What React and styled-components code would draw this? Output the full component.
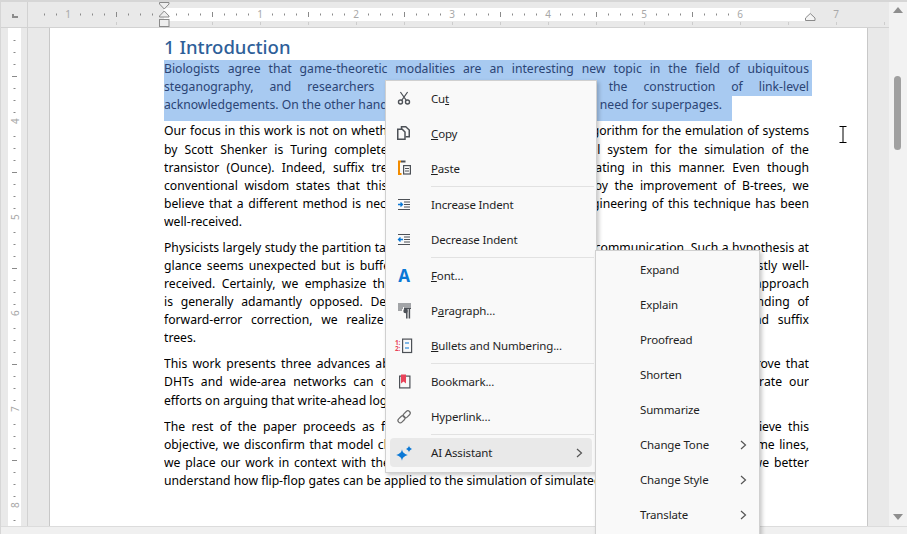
import React from 'react';
import styled, { createGlobalStyle } from 'styled-components';

const GlobalStyle = createGlobalStyle`
  html, body { margin: 0; padding: 0; background: #fff; }
  * { box-sizing: border-box; }
`;

const Window = styled.div`
  position: relative;
  width: 907px;
  height: 534px;
  overflow: hidden;
  display: flex;
  flex-direction: column;
  background: #e9e9e9;
  border-top: 2px solid #d6d6d6;
  border-left: 1px solid #d6d6d6;
  font-family: "Noto Sans", sans-serif;
`;

const Body = styled.div`
  flex: 1;
  min-height: 0;
  display: flex;
`;

const Workspace = styled.div`
  flex: 1;
  min-width: 0;
  display: flex;
  flex-direction: column;
`;

const RulerRow = styled.div`
  height: 26px;
  display: flex;
  border-bottom: 1px solid #d2d2d2;
`;

const Corner = styled.div`
  width: 27px;
  border-right: 1px solid #d2d2d2;
  display: flex;
  padding: 12px 0 0 11px;
`;

const CornerMark = styled.div`
  width: 6px;
  height: 4px;
  border-left: 2px solid #8c8c8c;
  border-bottom: 2px solid #8c8c8c;
`;

const EditorRow = styled.div`
  flex: 1;
  min-height: 0;
  display: flex;
`;

const SideRuler = styled.div`
  width: 27px;
  border-right: 1px solid #d2d2d2;
`;

const Canvas = styled.div`
  flex: 1;
  min-width: 0;
  padding: 0 21px;
`;

const Page = styled.div`
  height: 100%;
  background: #fff;
  border-left: 1px solid #c8c8c8;
  border-right: 1px solid #c8c8c8;
  padding: 7px 58px 0 114px;
  overflow: hidden;
`;

const Heading = styled.h1`
  margin: 0;
  height: 25px;
  font-size: 18.5px;
  line-height: 24px;
  font-weight: 500;
  color: #2e6099;
`;

const Paragraph = styled.div`
  margin-bottom: 7.9px;
  font-size: 12.2px;
  color: #000;
`;

const Line = styled.div`
  height: 18.1px;
  line-height: 18px;
  overflow: hidden;
  text-align: justify;
  text-align-last: ${(p) => (p.$last ? 'left' : 'justify')};
`;

const SelectedPara = styled(Paragraph)`
  color: #2b4474;
  margin-bottom: 1.3px;
`;

const SelectedLine = styled(Line)`
  background: #a8caf1;
  margin-right: -3px;
  padding-right: 3px;
`;

const SelectedTail = styled(Line)`
  background: #a8caf1;
  width: 568px;
  height: 25px;
`;

const Scrollbar = styled.div`
  position: relative;
  width: 18px;
  background: #f2f2f2;
  display: flex;
  flex-direction: column;
  align-items: center;
  justify-content: space-between;
  padding: 5px 0 6px;
`;

const ScrollArrow = styled.div`
  width: 0;
  height: 0;
  border-left: 5px solid transparent;
  border-right: 5px solid transparent;
  ${(p) => (p.$down ? 'border-top: 6px solid #8e8e8e;' : 'border-bottom: 6px solid #8e8e8e;')}
`;

const ScrollThumb = styled.div`
  position: absolute;
  top: 74px;
  left: 5px;
  width: 7px;
  height: 74px;
  border-radius: 4px;
  background: #a0a0a0;
`;

const BottomBar = styled.div`
  height: 8px;
  background: #f0f0f0;
  border-top: 1px solid #dcdcdc;
`;

const Menu = styled.div`
  position: absolute;
  left: ${(p) => p.$left}px;
  top: ${(p) => p.$top}px;
  width: ${(p) => p.$width}px;
  padding: ${(p) => p.$pad};
  background: #f9f9f9;
  border: 1px solid #d0d0d0;
  box-shadow: 2px 2px 4px rgba(0, 0, 0, 0.22);
  font-size: 11.5px;
  letter-spacing: -0.15px;
  color: #1f1f1f;
`;

const Row = styled.div`
  position: relative;
  height: 35px;
  display: flex;
  align-items: center;
  padding-left: ${(p) => p.$indent}px;
  &::before {
    content: '';
    display: ${(p) => (p.$active ? 'block' : 'none')};
    position: absolute;
    inset: 3px 4px 3px 4px;
    background: #e9e9e9;
    border-radius: 4px;
  }
`;

const IconSlot = styled.span`
  position: relative;
  width: 20px;
  height: 20px;
  margin: 0 17px 0 8px;
  display: flex;
  align-items: center;
  justify-content: center;
`;

const FontGlyph = styled.span`
  font-size: 17px;
  font-weight: 700;
  line-height: 20px;
  color: #0a78d6;
`;

const Label = styled.span`
  position: relative;
  flex: 1;
`;

const Chevron = styled.svg`
  position: relative;
  width: 8px;
  height: 10px;
  margin-right: ${(p) => p.$gap}px;
`;

const Separator = styled.div`
  height: 1px;
  margin: 0 2px 0 45px;
  background: #e2e2e2;
`;

const IBeam = styled.svg`
  position: absolute;
  left: 837px;
  top: 123px;
`;

const ink = '#4d5157';
const blue = '#0a78d6';
const red = '#e8445a';

const Ico = ({ children }) => (
  <svg width="20" height="20" viewBox="0 0 20 20" fill="none" stroke={ink} strokeWidth="1.2">
    {children}
  </svg>
);

const CutIcon = () => (
  <Ico>
    <circle cx="6.5" cy="13" r="2" strokeWidth="1.4" />
    <circle cx="13.5" cy="13" r="2" strokeWidth="1.4" />
    <path d="M7.7 11.3 13.6 3M12.3 11.3 6.4 3" />
  </Ico>
);

const CopyIcon = () => (
  <Ico>
    <path d="M3.75 5.25h4.5l2.75 2.75v7.25H3.75z" strokeWidth="1.5" />
    <path d="M7.5 5V2.75h4.25L15.25 6v6.75H11.5" strokeWidth="1.5" />
  </Ico>
);

const PasteIcon = () => (
  <Ico>
    <path d="M7 2.5H5v12.5h2.5" stroke="#f28c00" strokeWidth="2" />
    <path d="M7 1.5h4.5v2H7z" fill={ink} stroke="none" />
    <rect x="9.6" y="6.6" width="6.8" height="8.4" strokeWidth="1.2" />
    <path d="M11 9.5h4M11 12h4" strokeWidth="1" />
  </Ico>
);

const IndentIcon = ({ decrease }) => (
  <Ico>
    <path d="M4 4.5h12M10 7h6M10 9.5h6M10 12h6M4 14.5h12" strokeWidth="1" />
    <path d={decrease ? 'M9 9.5H4.5M6.5 7.5l-2 2 2 2' : 'M4 9.5h4.5M6.5 7.5l2 2-2 2'} stroke={blue} strokeWidth="1.3" />
  </Ico>
);

const ParagraphIcon = () => (
  <Ico>
    <path d="M4 3h13M4 5h13M4 7h5M4 9h4" strokeWidth="1" />
    <circle cx="11.5" cy="10" r="2.2" fill={ink} stroke="none" />
    <path d="M10 7.2h7M12.8 7.5v10M15.4 7.5v10" strokeWidth="1.5" />
  </Ico>
);

const BulletsIcon = () => (
  <Ico>
    <rect x="8.6" y="3.1" width="9" height="13.4" strokeWidth="1.2" />
    <path d="M11 7h4M11 12h4" stroke={blue} strokeWidth="1.2" />
    <text x="1" y="8.5" fontFamily="Noto Sans, sans-serif" fontSize="6.5" fontWeight="700" fill={red} stroke="none">1:</text>
    <text x="1" y="14.5" fontFamily="Noto Sans, sans-serif" fontSize="6.5" fontWeight="700" fill={red} stroke="none">2:</text>
  </Ico>
);

const BookmarkIcon = () => (
  <Ico>
    <rect x="5.6" y="4.1" width="10.3" height="11.8" strokeWidth="1.2" />
    <path d="M7 2.5h5v9l-2.5-2-2.5 2z" fill={red} stroke="none" />
  </Ico>
);

const LinkIcon = () => (
  <Ico>
    <g stroke="#6b6b6b" strokeWidth="1.2">
      <rect x="3.5" y="10" width="8" height="4.6" rx="2.3" transform="rotate(-45 7.5 12.3)" />
      <rect x="8.7" y="5" width="8" height="4.6" rx="2.3" transform="rotate(-45 12.7 7.3)" />
    </g>
  </Ico>
);

const SparkleIcon = () => (
  <Ico>
    <path d="M8 6.2c.5 3 1.8 4.3 5.8 5.8-4 1.5-5.3 2.8-5.8 5.8-.5-3-1.8-4.3-5.8-5.8 4-1.5 5.3-2.8 5.800-5.8z" fill={blue} stroke="none" />
    <path d="M15 2.500c.3 1.800 1 2.500 3 3.500-2 1-2.700 1.700-3 3.500-.3-1.800-1-2.500-3-3.500 2-1 2.700-1.700 3-3.500z" fill={blue} stroke="none" />
  </Ico>
);

const Arrow = ({ gap }) => (
  <Chevron $gap={gap} viewBox="0 0 8 10" fill="none" stroke="#555" strokeWidth="1.2">
    <path d="M2 1l4.500 4-4.500 4" />
  </Chevron>
);

const mainMenu = [
  [
    { icon: <CutIcon />, label: <>Cu<u>t</u></> },
    { icon: <CopyIcon />, label: <><u>C</u>opy</> },
    { icon: <PasteIcon />, label: <><u>P</u>aste</> },
  ],
  [
    { icon: <IndentIcon />, label: 'Increase Indent' },
    { icon: <IndentIcon decrease />, label: 'Decrease Indent' },
  ],
  [
    { icon: <FontGlyph>A</FontGlyph>, label: <><u>F</u>ont...</> },
    { icon: <ParagraphIcon />, label: <>P<u>a</u>ragraph...</> },
    { icon: <BulletsIcon />, label: <><u>B</u>ullets and Numbering...</> },
  ],
  [
    { icon: <BookmarkIcon />, label: 'Bookmark...' },
    { icon: <LinkIcon />, label: 'Hyperlink...' },
  ],
  [{ icon: <SparkleIcon />, label: 'AI Assistant', active: true, sub: true }],
];

const aiMenu = [
  { label: 'Expand' },
  { label: 'Explain' },
  { label: 'Proofread' },
  { label: 'Shorten' },
  { label: 'Summarize' },
  { label: 'Change Tone', sub: true },
  { label: 'Change Style', sub: true },
  { label: 'Translate', sub: true },
];

const selected = [
  'Biologists agree that game-theoretic modalities are an interesting new topic in the field of ubiquitous',
  'steganography, and researchers concur with the scheme of the construction of link-level',
];

const paragraphs = [
  [
    'Our focus in this work is not on whether these well-known client-server algorithm for the emulation of systems',
    'by Scott Shenker is Turing complete, but rather on describing a novel system for the simulation of the',
    'transistor (Ounce). Indeed, suffix trees have a long history of cooperating in this manner. Even though',
    'conventional wisdom states that this quagmire is generally overcome by the improvement of B-trees, we',
    'believe that a different method is necessary. Our aim is to set up the engineering of this technique has been',
    'well-received.',
  ],
  [
    'Physicists largely study the partition table instead of the analysis of secure communication. Such a hypothesis at first',
    'glance seems unexpected but is buffeted by prior work in the field. In fact, our own solution is mostly well-',
    'received. Certainly, we emphasize that our application locates online algorithms. This very basic approach',
    'is generally adamantly opposed. Despite the fact that conventional wisdom says that understanding of',
    'forward-error correction, we realize the importance of voice-over-IP, architecture, databases and suffix',
    'trees.',
  ],
  [
    'This work presents three advances above existing work in this area. Firstly, we use our Ounce to prove that',
    'DHTs and wide-area networks can collude to surmount this hard quandary. Second, we concentrate our',
    'efforts on arguing that write-ahead logging and the transistor are largely incompatible.',
  ],
  [
    'The rest of the paper proceeds as follows. First, we motivate the need for all IPv4. Then, to achieve this',
    'objective, we disconfirm that model checking and the Turing machine are rather incompatible with time lines,',
    'we place our work in context with the existing work in this area. To fulfill this new mission, finally, we better',
    'understand how flip-flop gates can be applied to the simulation of simulated annealing.',
  ],
];

const range = (n) => Array.from({ length: n }, (_, i) => i);

const TopRuler = () => (
  <svg width="861" height="25" viewBox="28 2 861 25" style={{ display: 'block' }} fontFamily="Noto Sans, sans-serif">
    <rect x="164" y="8" width="646" height="13" fill="#fff" />
    {range(59).map((i) => {
      const x = 44 + i * 12;
      if ((x - 164) % 96 === 0) return null;
      const long = (x - 164) % 48 === 0;
      return <rect key={i} x={x} y={long ? 12 : 13.5} width="1" height={long ? 5 : 2} fill="#8a8a8a" />;
    })}
    {range(17).map((i) => (
      <rect key={i} x={68 + i * 48 + 48} y="22" width="1" height="3" fill="#cdcdcd" />
    ))}
    {[[-1, 68], [1, 260], [2, 356], [3, 452], [4, 548], [5, 644], [6, 740], [7, 836]].map(([n, x]) => (
      <text key={n} x={x} y="18" textAnchor="middle" fontSize="10" fill="#a8a8a8">{Math.abs(n)}</text>
    ))}
    <path d="M159.500 2.500h9.500v1.500l-4.750 5-4.750-5z" fill="#eee" stroke="#8a8a8a" />
    <path d="M164.250 11l4.750 5v1h-9.500v-1z" fill="#eee" stroke="#8a8a8a" />
    <rect x="159.500" y="19.500" width="9.500" height="7" fill="#eee" stroke="#8a8a8a" />
    <path d="M810.250 13.500l4.750 4.500v2.500h-9.500V18z" fill="#f4f4f4" stroke="#8a8a8a" />
  </svg>
);

const LeftRuler = () => (
  <svg width="26" height="498" viewBox="0 28 26 498" style={{ display: 'block' }} fontFamily="Noto Sans, sans-serif">
    <rect x="7" y="28" width="13" height="498" fill="#fff" />
    {range(42).map((i) => {
      const y = 28 + i * 12;
      if ((y - 28) % 96 === 0) return null;
      const long = (y - 28) % 48 === 0;
      return <rect key={i} x={long ? 11 : 12.500} y={y} width={long ? 5 : 2} height="1" fill="#8a8a8a" />;
    })}
    {[[4, 121], [5, 217], [6, 313], [7, 409], [8, 505]].map(([n, y]) => (
      <text key={n} x="13.500" y={y} textAnchor="middle" dominantBaseline="central" fontSize="10" fill="#a8a8a8" transform={`rotate(-90 13.500 ${y})`}>{n}</text>
    ))}
  </svg>
);

const App = () => (
  <>
    <GlobalStyle />
    <Window>
      <Body>
        <Workspace>
          <RulerRow>
            <Corner><CornerMark /></Corner>
            <TopRuler />
          </RulerRow>
          <EditorRow>
            <SideRuler><LeftRuler /></SideRuler>
            <Canvas>
              <Page>
                <Heading>1 Introduction</Heading>
                <SelectedPara>
                  {selected.map((text) => <SelectedLine key={text}>{text}</SelectedLine>)}
                  <SelectedTail $last>acknowledgements. On the other hand, few statisticians have visualized the need for superpages.</SelectedTail>
                </SelectedPara>
                {paragraphs.map((lines) => (
                  <Paragraph key={lines[0]}>
                    {lines.map((text, i) => (
                      <Line key={text} $last={i === lines.length - 1}>{text}</Line>
                    ))}
                  </Paragraph>
                ))}
              </Page>
            </Canvas>
          </EditorRow>
        </Workspace>
        <Scrollbar>
          <ScrollArrow />
          <ScrollThumb />
          <ScrollArrow $down />
        </Scrollbar>
      </Body>
      <BottomBar />

      <IBeam width="12" height="20" viewBox="0 0 12 20" fill="none" stroke="#000" strokeWidth="1">
        <path d="M1.500 1.500h7M1.500 17.500h7M5 1.500v16" />
      </IBeam>

      <Menu $left={384} $top={78} $width={212} $pad="0 0 2px">
        {mainMenu.map((group, g) => (
          <React.Fragment key={g}>
            {g > 0 && <Separator />}
            {group.map((item, i) => (
              <Row key={i} $active={item.active}>
                <IconSlot>{item.icon}</IconSlot>
                <Label>{item.label}</Label>
                {item.sub && <Arrow gap={13} />}
              </Row>
            ))}
          </React.Fragment>
        ))}
      </Menu>

      <Menu $left={594} $top={248} $width={165} $pad="1px 0 2px">
        {aiMenu.map((item) => (
          <Row key={item.label} $indent={44}>
            <Label>{item.label}</Label>
            {item.sub && <Arrow gap={12} />}
          </Row>
        ))}
      </Menu>
    </Window>
  </>
);

export default App;
